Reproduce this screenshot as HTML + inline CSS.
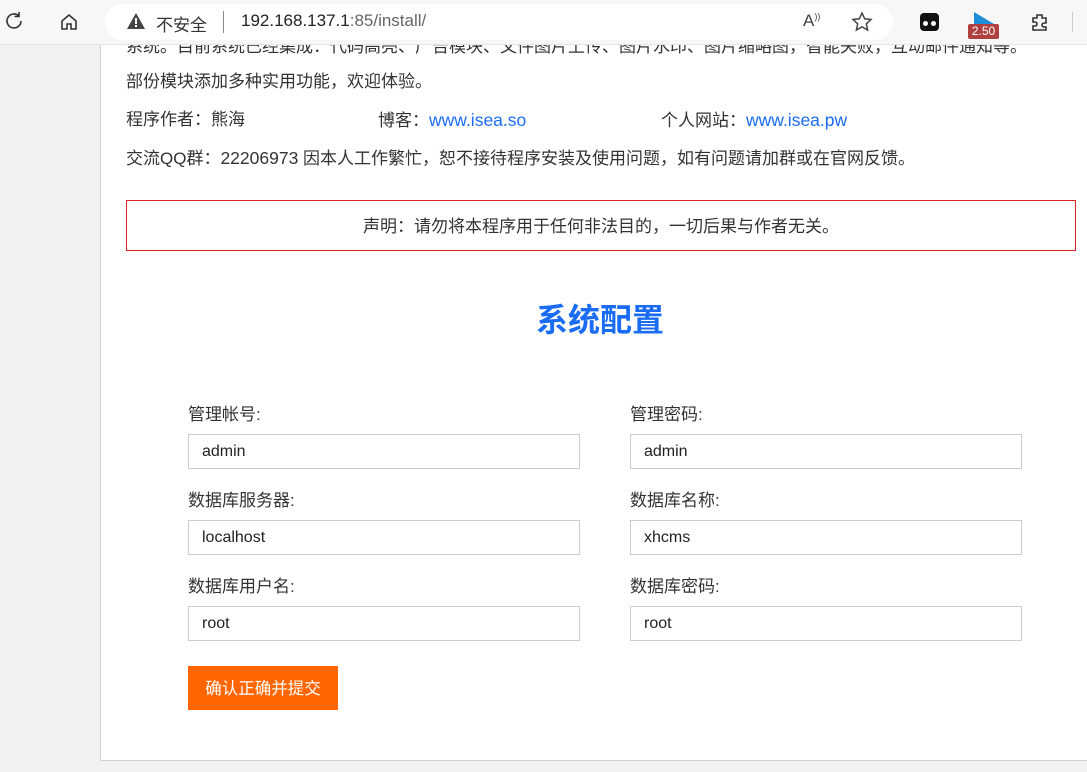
<!DOCTYPE html>
<html><head><meta charset="utf-8"><style>
*{margin:0;padding:0;box-sizing:border-box}
body{width:1087px;height:772px;overflow:hidden;background:#f2f2f2;font-family:"Liberation Sans","Noto Sans CJK SC",sans-serif;color:#333;position:relative}
.abs{position:absolute;white-space:nowrap}
#page{position:absolute;left:100px;top:0;width:1000px;height:761px;background:#fff;border-left:1px solid #d0d0d0;border-bottom:1px solid #d0d0d0}
.t{font-size:17px;line-height:20px}
a{color:#1a6cf5;text-decoration:none}
.lbl{font-size:17px}
.in{position:absolute;width:392px;height:35px;border:1px solid #ccc;background:#fff;font-size:16px;line-height:33px;padding-left:13px;color:#222}
#bar{position:absolute;left:0;top:0;width:1087px;height:45px;background:#f7f7f7;border-bottom:1px solid #e4e4e4}
#addr{position:absolute;left:105px;top:4px;width:788px;height:36px;border-radius:18px;background:#fff}
</style></head><body>
<div id="page"></div>
<div class="abs t" style="left:126px;top:37px">系统。目前系统已经集成：代码高亮、广告模块、文件图片上传、图片水印、图片缩略图，智能失败，互动邮件通知等。</div>
<div class="abs t" style="left:126px;top:72px">部份模块添加多种实用功能，欢迎体验。</div>
<div class="abs t" style="left:126px;top:110px">程序作者：熊海</div>
<div class="abs t" style="left:378px;top:110px">博客：<a style="font-size:17.5px">www.isea.so</a></div>
<div class="abs t" style="left:661px;top:110px">个人网站：<a style="font-size:17.5px">www.isea.pw</a></div>
<div class="abs t" style="left:126px;top:148px">交流QQ群：<span style="font-size:17.5px">22206973</span> 因本人工作繁忙，恕不接待程序安装及使用问题，如有问题请加群或在官网反馈。</div>
<div class="abs" style="left:126px;top:200px;width:950px;height:51px;border:1px solid #e02020;text-align:center;font-size:17px;line-height:51px">声明：请勿将本程序用于任何非法目的，一切后果与作者无关。</div>
<div class="abs" style="left:536px;top:300px;font-size:32px;font-weight:bold;color:#1a6cf5;line-height:40px">系统配置</div>
<div class="abs lbl" style="left:188px;top:400px">管理帐号:</div>
<div class="abs lbl" style="left:630px;top:400px">管理密码:</div>
<div class="in" style="left:188px;top:434px">admin</div>
<div class="in" style="left:630px;top:434px">admin</div>
<div class="abs lbl" style="left:188px;top:486px">数据库服务器:</div>
<div class="abs lbl" style="left:630px;top:486px">数据库名称:</div>
<div class="in" style="left:188px;top:520px">localhost</div>
<div class="in" style="left:630px;top:520px">xhcms</div>
<div class="abs lbl" style="left:188px;top:572px">数据库用户名:</div>
<div class="abs lbl" style="left:630px;top:572px">数据库密码:</div>
<div class="in" style="left:188px;top:606px">root</div>
<div class="in" style="left:630px;top:606px">root</div>
<div class="abs" style="left:188px;top:666px;width:150px;height:44px;background:#ff6600;color:#fff;font-size:16.5px;line-height:46px;text-align:center">确认正确并提交</div>
<div id="bar">
<svg class="abs" style="left:3px;top:10px" width="22" height="22" viewBox="0 0 22 22" fill="none" stroke="#333" stroke-width="1.6"><path d="M18 11a7 7 0 1 1-2.5-5.4"/><path d="M16 2v4.5h-4.5"/></svg>
<svg class="abs" style="left:58px;top:11px" width="22" height="22" viewBox="0 0 22 22" fill="none" stroke="#333" stroke-width="1.6"><path d="M4 10l7-6 7 6v8h-5v-5h-4v5H4z"/></svg>
<div id="addr"></div>
<svg class="abs" style="left:126px;top:11px" width="20" height="20" viewBox="0 0 20 20"><path d="M10 2L19 18H1z" fill="#444"/><rect x="9" y="7" width="2" height="6" fill="#fff"/><rect x="9" y="14" width="2" height="2" fill="#fff"/></svg>
<div class="abs" style="left:156px;top:11px;font-size:17px;color:#333">不安全</div>
<div class="abs" style="left:223px;top:11px;width:1px;height:22px;background:#888"></div>
<div class="abs" style="left:241px;top:11px;font-size:17px;color:#222">192.168.137.1<span style="color:#666">:85/install/</span></div>
<div class="abs" style="left:803px;top:11px;font-size:17px;color:#444">A<sup style="font-size:9px">))</sup></div>
<svg class="abs" style="left:851px;top:11px" width="22" height="22" viewBox="0 0 22 22" fill="none" stroke="#444" stroke-width="1.5"><path d="M11 2l2.7 5.8 6.3.7-4.7 4.3 1.3 6.2L11 15.9 5.4 19l1.3-6.2L2 8.5l6.3-.7z"/></svg>
<div class="abs" style="left:920px;top:13px;width:19px;height:18px;background:#111;border-radius:4px"><span style="position:absolute;left:3px;top:8px;width:5px;height:5px;background:#fff;border-radius:50%"></span><span style="position:absolute;left:11px;top:8px;width:5px;height:5px;background:#fff;border-radius:50%"></span></div>
<svg class="abs" style="left:972px;top:10px" width="24" height="18" viewBox="0 0 24 18"><path d="M2 2l20 12H2z" fill="#1d8fd8"/></svg>
<div class="abs" style="left:968px;top:24px;width:31px;height:15px;background:#b04040;color:#fff;font-size:12px;line-height:15px;text-align:center;border-radius:2px">2.50</div>
<svg class="abs" style="left:1029px;top:11px" width="22" height="22" viewBox="0 0 22 22" fill="none" stroke="#333" stroke-width="1.6"><path d="M8 4h5v3a2 2 0 1 1 0 0v0h4v5h-2a2 2 0 1 0 0 4h2v3H4v-4h2a2 2 0 1 0 0-4H4V7h4z"/></svg>
<div class="abs" style="left:1072px;top:12px;width:1px;height:20px;background:#ccc"></div>
</div>
</body></html>
